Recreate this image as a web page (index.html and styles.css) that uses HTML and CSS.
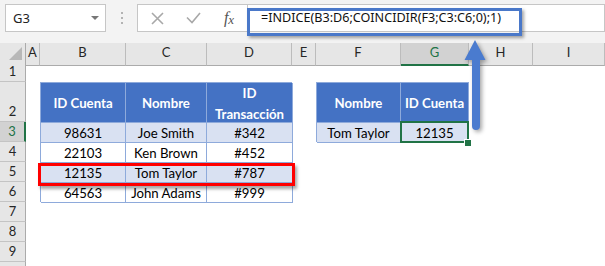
FILE: index.html
```html
<!DOCTYPE html>
<html>
<head>
<meta charset="utf-8">
<link rel="stylesheet" href="styles.css">
</head>
<body>
<div class="app">
  <div class="toolbar">
    <div class="namebox"><span class="nb-text">G3</span><span class="caret"></span></div>
    <div class="grip"><i></i><i></i><i></i></div>
    <div class="fbtns">
      <span class="slot"><svg class="ico" width="13" height="13" viewBox="0 0 13 13"><path d="M1 1 L12 12 M12 1 L1 12"/></svg></span>
      <span class="slot"><svg class="ico" width="15" height="12" viewBox="0 0 15 12"><path d="M1 5.5 L6 10.5 L14 1"/></svg></span>
      <span class="slot"><span class="fx">f<span class="fx-x">x</span></span></span>
    </div>
    <div class="finput">=INDICE(B3:D6;COINCIDIR(F3;C3:C6;0);1)</div>
  </div>

  <div class="colheads">
    <div class="corner"><svg width="26" height="19" viewBox="0 0 26 19"><polygon points="22,4 22,17 9,17" class="tri"/></svg></div>
    <div class="ch">A</div>
    <div class="ch">B</div>
    <div class="ch">C</div>
    <div class="ch">D</div>
    <div class="ch">E</div>
    <div class="ch">F</div>
    <div class="ch sel">G</div>
    <div class="ch">H</div>
    <div class="ch">I</div>
  </div>

  <div class="sheet">
    <div class="rowheads">
      <div class="rh">1</div>
      <div class="rh tall">2</div>
      <div class="rh sel">3</div>
      <div class="rh">4</div>
      <div class="rh">5</div>
      <div class="rh">6</div>
      <div class="rh">7</div>
      <div class="rh">8</div>
      <div class="rh">9</div>
      <div class="rh"></div>
    </div>
    <div class="cells">
      <div class="tbl tbl1">
        <div class="th">ID Cuenta</div>
        <div class="th">Nombre</div>
        <div class="th">ID<br>Transacción</div>
        <div class="td band">98631</div>
        <div class="td band">Joe Smith</div>
        <div class="td band">#342</div>
        <div class="td">22103</div>
        <div class="td">Ken Brown</div>
        <div class="td">#452</div>
        <div class="td band">12135</div>
        <div class="td band">Tom Taylor</div>
        <div class="td band">#787</div>
        <div class="td">64563</div>
        <div class="td">John Adams</div>
        <div class="td">#999</div>
      </div>
      <div class="tbl tbl2">
        <div class="th">Nombre</div>
        <div class="th">ID Cuenta</div>
        <div class="td band">Tom Taylor</div>
        <div class="td band">12135</div>
      </div>
      <div class="redbox"></div>
      <div class="selbox"><span class="handle"></span></div>
    </div>
  </div>

  <div class="fhl"></div>
  <svg class="arrow" width="34" height="104" viewBox="0 0 34 104">
    <path d="M15 5 L25.5 25 L20 25 L20 91 A4 4 0 0 1 12 91 L12 25 L4.5 25 Z"/>
  </svg>
</div>
</body>
</html>
```

FILE: styles.css
```css
* { box-sizing: border-box; }
html, body { margin: 0; padding: 0; }
body {
  width: 605px;
  height: 266px;
  overflow: hidden;
  background: #fff;
  font-family: Lato, "Liberation Sans", sans-serif;
}
.app {
  position: relative;
  width: 605px;
  height: 266px;
  overflow: hidden;
}

/* ---------- toolbar / formula bar ---------- */
.toolbar {
  height: 43px;
  background: #f3f3f3;
  display: flex;
  align-items: flex-start;
  padding: 4px 0 0 5px;
}
.namebox {
  width: 101px;
  height: 28px;
  background: #fff;
  border: 1px solid #c6c6c6;
  display: flex;
  align-items: center;
  justify-content: space-between;
  padding: 0 6px 0 7px;
  font-family: "Noto Sans", "Open Sans", sans-serif;
  font-size: 13px;
  color: #222;
}
.caret {
  width: 0;
  height: 0;
  border-left: 4px solid transparent;
  border-right: 4px solid transparent;
  border-top: 4px solid #777;
}
.grip {
  width: 31px;
  height: 28px;
  display: flex;
  flex-direction: column;
  align-items: center;
  justify-content: center;
  gap: 3px;
}
.grip i {
  display: block;
  width: 2px;
  height: 2px;
  background: #b3b3b3;
}
.fbtns {
  width: 111px;
  height: 28px;
  background: #fff;
  border: 1px solid #c6c6c6;
  display: grid;
  grid-template-columns: 38px 35px 36px;
  align-items: center;
}
.slot {
  display: flex;
  justify-content: center;
  align-items: center;
}
.ico path {
  fill: none;
  stroke: #a8a8a8;
  stroke-width: 1.6;
}
.fx {
  font-family: "Liberation Serif", serif;
  font-style: italic;
  font-size: 16px;
  color: #555;
  line-height: 1;
}
.fx-x {
  font-size: 13px;
  position: relative;
  top: 1px;
}
.finput {
  flex: 1;
  height: 28px;
  background: #fff;
  border: 1px solid #c6c6c6;
  border-left: none;
  padding-left: 13px;
  font-family: "Noto Sans", "Open Sans", sans-serif;
  font-size: 12.6px;
  line-height: 26px;
  color: #111;
  white-space: nowrap;
}
.fhl {
  position: absolute;
  left: 247px;
  top: 8px;
  width: 275px;
  height: 28px;
  border: 3px solid #4a78c9;
  box-shadow: 2px 2px 3px rgba(0, 0, 0, 0.35);
}

/* ---------- column headers ---------- */
.colheads {
  display: grid;
  grid-template-columns: 26px 14px 86px 81px 85px 24px 85px 68px 64px 72px;
  height: 19px;
}
.corner, .ch {
  background: #e6e6e6;
  border-bottom: 1px solid #ababab;
  border-right: 1px solid #bcbcbc;
}
.corner { border-right-color: #ababab; }
.tri { fill: #b8b8b8; }
.ch {
  font-size: 13px;
  line-height: 18px;
  text-align: center;
  color: #262626;
}
.ch.sel {
  background: #d2d2d2;
  color: #217346;
  border-bottom: 2px solid #217346;
}

/* ---------- sheet body ---------- */
.sheet {
  display: flex;
}
.rowheads {
  width: 26px;
  display: flex;
  flex-direction: column;
}
.rh {
  height: 20px;
  flex: none;
  background: #e6e6e6;
  border-right: 1px solid #ababab;
  border-bottom: 1px solid #c4c4c4;
  font-size: 13px;
  line-height: 19px;
  color: #262626;
  text-align: center;
  display: flex;
  align-items: flex-end;
  justify-content: center;
}
.rh.tall { height: 40px; }
.rh.sel {
  background: #d2d2d2;
  color: #217346;
  border-right: 2px solid #217346;
}
.cells {
  display: grid;
  grid-template-columns: 14px 86px 81px 85px 24px 85px 68px 64px 72px;
  grid-template-rows: 20px 40px repeat(8, 20px);
}

/* ---------- tables ---------- */
.tbl {
  display: grid;
  grid-template-rows: 40px repeat(4, 20px);
  border-left: 1px solid #8eaadb;
  border-top: 1px solid #8eaadb;
  font-size: 13.2px;
  color: #000;
}
.tbl1 {
  grid-column: 2 / 5;
  grid-row: 2 / 7;
  grid-template-columns: 85px 81px 86px;
}
.tbl2 {
  grid-column: 6 / 8;
  grid-row: 2 / 4;
  grid-template-columns: 84px 68px;
}
.th, .td {
  border-right: 1px solid #8eaadb;
  border-bottom: 1px solid #8eaadb;
  display: flex;
  align-items: center;
  justify-content: center;
  text-align: center;
  white-space: nowrap;
}
.th {
  background: #4472c4;
  color: #fff;
  font-weight: 700;
  line-height: 20.5px;
  padding-top: 2px;
}
.td {
  line-height: 20px;
  background: #fff;
}
.td.band { background: #d9e1f2; }

/* ---------- overlays on the grid ---------- */
.redbox {
  grid-column: 2 / 5;
  grid-row: 5;
  margin: 1px -3px -4px -2px;
  border: 3px solid #f00;
  box-shadow: 2px 3px 3px rgba(0, 0, 0, 0.35);
}
.selbox {
  grid-column: 7;
  grid-row: 3;
  margin: -1px 0 -1px -1px;
  border: 2px solid #217346;
  position: relative;
}
.handle {
  position: absolute;
  right: -4px;
  bottom: -5px;
  width: 7px;
  height: 7px;
  background: #217346;
  border: 1px solid #fff;
  border-width: 1px 0 0 1px;
}

/* ---------- arrow ---------- */
.arrow {
  position: absolute;
  left: 460px;
  top: 35px;
  filter: drop-shadow(2px 2px 2px rgba(0, 0, 0, 0.35));
}
.arrow path { fill: #4a7bcf; }
```
